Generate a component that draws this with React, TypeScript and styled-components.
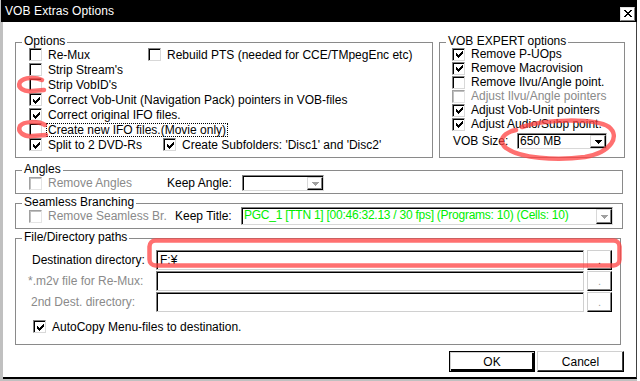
import React from 'react'
import styled, { createGlobalStyle } from 'styled-components'

const GlobalStyle = createGlobalStyle`
  html, body {
    margin: 0;
    padding: 0;
    background: #fff;
  }
  body {
    font-family: "Liberation Sans", Arial, sans-serif;
    font-size: 12px;
    color: #000;
  }
  * {
    box-sizing: border-box;
  }
`

const CHECK = ['......#', '.....##', '#...###', '##.###.', '#####..', '.###...', '..#....']

const CheckMark = () => (
  <svg width="7" height="7" viewBox="0 0 7 7" shapeRendering="crispEdges">
    {CHECK.flatMap((row, y) =>
      row.split('').map((c, x) =>
        c === '#' ? <rect key={`${x}-${y}`} x={x} y={y} width="1" height="1" fill="#000" /> : null
      )
    )}
  </svg>
)

const Arrow = ({ color }: { color: string }) => (
  <svg width="7" height="4" viewBox="0 0 7 4" shapeRendering="crispEdges">
    <path d="M0 0h7v1h-1v1h-1v1h-1v1h-1v-1h-1v-1h-1v-1h-1z" fill={color} />
  </svg>
)

type CheckProps = {
  label: string
  checked?: boolean
  disabled?: boolean
  w?: number
  focus?: boolean
}

const Check = ({ label, checked, disabled, w, focus }: CheckProps) => (
  <CheckRow $w={w} $disabled={disabled}>
    <Box $disabled={disabled}>{checked && <CheckMark />}</Box>
    <CheckText $focus={focus}>{label}</CheckText>
  </CheckRow>
)

const Combo = ({ value, w, h, green, dim }: { value: string; w: number; h: number; green?: boolean; dim?: boolean }) => (
  <ComboBox $w={w} $h={h}>
    <ComboText $green={green}>{value}</ComboText>
    <ComboButton>
      <Arrow color={dim ? '#a0a0a0' : '#000'} />
    </ComboButton>
  </ComboBox>
)

const PathRow = ({ label, value, disabled, indent }: { label: string; value?: string; disabled?: boolean; indent: number }) => (
  <FieldRow>
    <FieldLabel $disabled={disabled} $indent={indent}>{label}</FieldLabel>
    <TextBox>{value}</TextBox>
    <Browse $disabled={disabled}>.</Browse>
  </FieldRow>
)

export default function App() {
  return (
    <>
      <GlobalStyle />
      <Window>
        <TitleBar>
          <span>VOB Extras Options</span>
          <CloseButton>
            <svg width="8" height="7" viewBox="0 0 8 7" shapeRendering="crispEdges">
              <path d="M0 0h2v1h1v1h2v-1h1v-1h2v1h-1v1h-1v1h-1v1h1v1h1v1h1v1h-2v-1h-1v-1h-2v1h-1v1h-2v-1h1v-1h1v-1h1v-1h-1v-1h-1v-1h-1z" fill="#000" />
            </svg>
          </CloseButton>
        </TitleBar>
        <Frame>
          <TopRow>
            <Group $w={418}>
              <Legend>Options</Legend>
              <GroupBody $pl={13}>
                <Line>
                  <Check label="Re-Mux" w={119} />
                  <Check label="Rebuild PTS (needed for CCE/TMpegEnc etc)" />
                </Line>
                <Check label="Strip Stream's" />
                <Check label="Strip VobID's" />
                <Check label="Correct Vob-Unit (Navigation Pack) pointers in VOB-files" checked />
                <Check label="Correct original IFO files." checked />
                <Check label="Create new IFO files.(Movie only)" focus />
                <Line>
                  <Check label="Split to 2 DVD-Rs" checked w={134} />
                  <Check label="Create Subfolders: 'Disc1' and 'Disc2'" checked />
                </Line>
              </GroupBody>
            </Group>
            <Group $w={186}>
              <Legend>VOB EXPERT options</Legend>
              <GroupBody $pl={12}>
                <Expert>
                  <Check label="Remove P-UOps" checked />
                  <Check label="Remove Macrovision" checked />
                  <Check label="Remove Ilvu/Angle point." />
                  <Check label="Adjust Ilvu/Angle pointers" disabled />
                  <Check label="Adjust Vob-Unit pointers" checked />
                  <Check label="Adjust Audio/Subp point." checked />
                </Expert>
                <SizeRow>
                  <InlineLabel $w={64}>VOB Size:</InlineLabel>
                  <Combo value="650 MB" w={90} h={16} />
                </SizeRow>
              </GroupBody>
            </Group>
          </TopRow>
          <Group>
            <Legend>Angles</Legend>
            <GroupBody $pl={13} $pb={2}>
              <Line>
                <Check label="Remove Angles" disabled w={138} />
                <InlineLabel $w={75}>Keep Angle:</InlineLabel>
                <Combo value="" w={82} h={16} dim />
              </Line>
            </GroupBody>
          </Group>
          <Group>
            <Legend>Seamless Branching</Legend>
            <GroupBody $pl={13} $pb={3}>
              <Line $h={18} $mt={-1}>
                <Check label="Remove Seamless Br." disabled w={146} />
                <InlineLabel $w={66}>Keep Title:</InlineLabel>
                <Combo
                  value="PGC_1 [TTN 1] [00:46:32.13 / 30 fps] (Programs: 10) (Cells: 10)"
                  w={372}
                  h={18}
                  green
                  dim
                />
              </Line>
            </GroupBody>
          </Group>
          <Group $w={606}>
            <Legend>File/Directory paths</Legend>
            <GroupBody $pl={12} $pt={7} $pb={10}>
              <Paths>
                <PathRow label="Destination directory:" value="F:¥" indent={4} />
                <PathRow label="*.m2v file for Re-Mux:" disabled indent={0} />
                <PathRow label="2nd Dest. directory:" disabled indent={3} />
              </Paths>
              <AutoCopy>
                <Check label="AutoCopy Menu-files to destination." checked />
              </AutoCopy>
            </GroupBody>
          </Group>
          <Buttons>
            <PushButton $default>OK</PushButton>
            <PushButton>Cancel</PushButton>
          </Buttons>
        </Frame>
        <Marks width="640" height="381" viewBox="0 0 640 381">
          <g fill="none" stroke="#ff4040" strokeOpacity="0.75" strokeWidth="4.5" strokeLinecap="round" strokeLinejoin="round">
            <path d="M42 80 C36 77 24 77 20 82 C17 88 24 92 32 91 L44 90" />
            <path d="M45 125 C38 121 24 121 20 126 C17 132 24 137 32 136 L46 135" />
            <path d="M522 127 C545 119 595 118 609 127 C620 136 612 152 585 157 C555 161 520 158 506 148 C498 141 502 133 516 130" />
            <rect x="149.5" y="240.5" width="470" height="25" rx="6" />
          </g>
        </Marks>
      </Window>
    </>
  )
}

const Window = styled.div`
  position: relative;
  width: 637px;
  height: 381px;
  display: flex;
  flex-direction: column;
  background: #c0c0c0;
`

const TitleBar = styled.div`
  height: 22px;
  margin-left: 1px;
  flex: none;
  display: flex;
  align-items: center;
  justify-content: space-between;
  padding: 0 2px 0 4px;
  background: #000;
  color: #fff;
  font-size: 12px;
  letter-spacing: 0.1px;
`

const CloseButton = styled.div`
  width: 15px;
  height: 14px;
  margin-top: 5px;
  display: flex;
  align-items: center;
  justify-content: center;
  background: #fff;
  border: 1px solid;
  border-color: #e0e0e0 #808080 #808080 #e0e0e0;
`

const Frame = styled.div`
  flex: 1;
  margin-left: 3px;
  margin-bottom: 2px;
  border-right: 1px solid #404040;
  border-bottom: 2px solid #000;
  background: #fff;
  display: flex;
  flex-direction: column;
  gap: 3px;
  padding: 14px 0 0 12px;
`

const TopRow = styled.div`
  display: flex;
  gap: 6px;
  height: 122px;
  margin-bottom: 3px;
`

const Group = styled.fieldset<{ $w?: number }>`
  margin: 0;
  padding: 0;
  min-width: 0;
  width: ${(p) => (p.$w ? `${p.$w}px` : '608px')};
  border: 1px solid #8a8a8a;
`

const Legend = styled.legend`
  margin-left: 6px;
  padding: 0 2px 2px;
  line-height: 10px;
  font-size: 12px;
`

const GroupBody = styled.div<{ $pl: number; $pt?: number; $pb?: number }>`
  display: flex;
  flex-direction: column;
  margin-top: -1px;
  padding: ${(p) => `${p.$pt ?? 0}px 0 ${p.$pb ?? 0}px ${p.$pl}px`};
`

const Line = styled.div<{ $h?: number; $mt?: number }>`
  display: flex;
  align-items: center;
  min-height: ${(p) => p.$h ?? 15}px;
  margin-top: ${(p) => p.$mt ?? 0}px;
`

const Expert = styled.div`
  display: flex;
  flex-direction: column;
  & > label {
    height: 14px;
  }
`

const CheckRow = styled.label<{ $w?: number; $disabled?: boolean }>`
  display: flex;
  align-items: center;
  gap: 4px;
  height: 15px;
  flex: none;
  width: ${(p) => (p.$w ? `${p.$w}px` : 'auto')};
  white-space: nowrap;
  color: ${(p) => (p.$disabled ? '#8a8a8a' : '#000')};
`

const Box = styled.span<{ $disabled?: boolean }>`
  width: 13px;
  height: 13px;
  flex: none;
  display: flex;
  align-items: center;
  justify-content: center;
  background: #fff;
  border: 1px solid;
  border-color: ${(p) => (p.$disabled ? '#a0a0a0 #e4e4e4 #e4e4e4 #a0a0a0' : '#808080 #d8d8d8 #d8d8d8 #808080')};
  box-shadow: ${(p) => (p.$disabled ? 'inset 1px 1px 0 #c0c0c0' : 'inset 1px 1px 0 #000')};
  padding: 1px 0 0 1px;
`

const CheckText = styled.span<{ $focus?: boolean }>`
  padding: 0 1px;
  line-height: 12px;
  border: 1px dotted ${(p) => (p.$focus ? '#000' : 'transparent')};
`

const SizeRow = styled.div`
  display: flex;
  align-items: center;
  margin-top: 2px;
  padding-left: 1px;
`

const InlineLabel = styled.span<{ $w: number }>`
  width: ${(p) => p.$w}px;
  flex: none;
  white-space: nowrap;
`

const ComboBox = styled.div<{ $w: number; $h: number }>`
  width: ${(p) => p.$w}px;
  height: ${(p) => p.$h}px;
  flex: none;
  display: flex;
  background: #fff;
  border: 1px solid;
  border-color: #808080 #d8d8d8 #d8d8d8 #808080;
  box-shadow: inset 1px 1px 0 #000;
  padding: 1px 0 0 1px;
`

const ComboText = styled.span<{ $green?: boolean }>`
  flex: 1;
  overflow: hidden;
  white-space: nowrap;
  padding-left: 1px;
  line-height: 13px;
  color: ${(p) => (p.$green ? '#00ee00' : '#000')};
  letter-spacing: ${(p) => (p.$green ? '-0.25px' : '0')};
`

const ComboButton = styled.span`
  width: 16px;
  flex: none;
  display: flex;
  align-items: center;
  justify-content: center;
  background: #fff;
  border: 1px solid;
  border-color: #d8d8d8 #000 #000 #d8d8d8;
  box-shadow: inset -1px -1px 0 #808080;
`

const Paths = styled.div`
  display: flex;
  flex-direction: column;
  gap: 1px;
`

const FieldRow = styled.div`
  display: flex;
  align-items: center;
  height: 20px;
`

const FieldLabel = styled.span<{ $disabled?: boolean; $indent: number }>`
  width: 128px;
  flex: none;
  padding-left: ${(p) => p.$indent}px;
  white-space: nowrap;
  color: ${(p) => (p.$disabled ? '#8a8a8a' : '#000')};
`

const TextBox = styled.div`
  width: 428px;
  height: 20px;
  flex: none;
  background: #fff;
  border: 1px solid;
  border-color: #808080 #d0d0d0 #d0d0d0 #808080;
  box-shadow: inset 1px 1px 0 #000;
  padding: 2px 0 0 3px;
  line-height: 15px;
`

const Browse = styled.div<{ $disabled?: boolean }>`
  width: 25px;
  height: 20px;
  margin-left: 3px;
  flex: none;
  display: flex;
  justify-content: center;
  padding-top: 3px;
  font-size: 11px;
  background: #fff;
  color: ${(p) => (p.$disabled ? '#a0a0a0' : '#000')};
  border: 1px solid;
  border-color: #d0d0d0 #000 #000 #d0d0d0;
  box-shadow: inset -1px -1px 0 #808080;
`

const AutoCopy = styled.div`
  margin-top: 7px;
  padding-left: 5px;
`

const Buttons = styled.div`
  display: flex;
  justify-content: flex-end;
  gap: 2px;
  width: 609px;
  margin-top: 3px;
`

const PushButton = styled.div<{ $default?: boolean }>`
  width: ${(p) => (p.$default ? '86px' : '87px')};
  height: 21px;
  display: flex;
  align-items: center;
  justify-content: center;
  background: #fff;
  font-size: 12px;
  border: 1px solid;
  border-color: ${(p) => (p.$default ? '#000' : '#d0d0d0 #000 #000 #d0d0d0')};
  box-shadow: ${(p) =>
    p.$default ? 'inset 1px 1px 0 #d0d0d0, inset -2px -2px 0 #000' : 'inset -1px -1px 0 #404040'};
`

const Marks = styled.svg`
  position: absolute;
  left: 0;
  top: 0;
  pointer-events: none;
`
